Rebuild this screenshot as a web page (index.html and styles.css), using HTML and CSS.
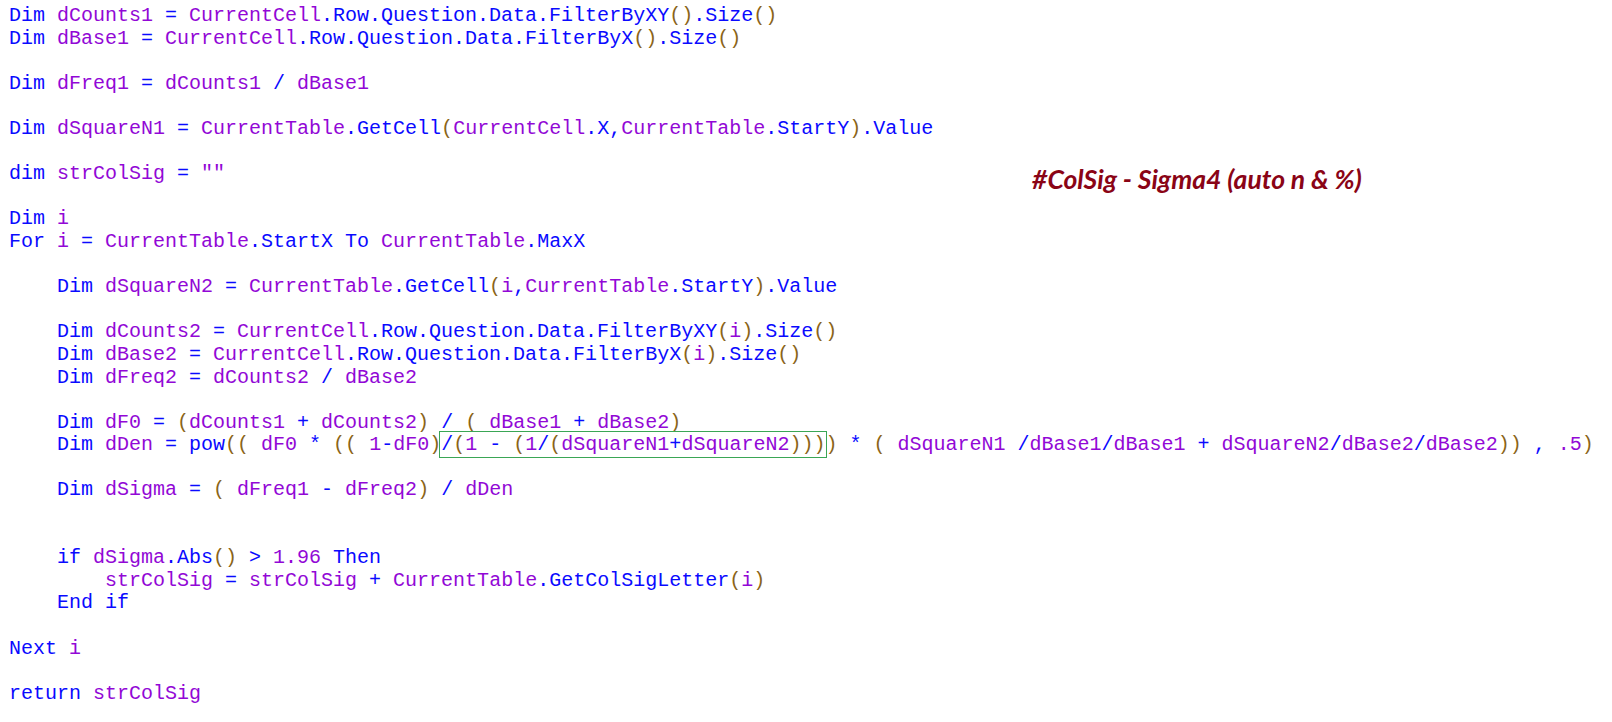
FILE: index.html
```html
<!doctype html>
<html lang="en">
    <head>
        <meta charset="UTF-8" />
        <meta name="viewport" content="width=device-width, initial-scale=1.0" />
        <title>ColSig - Sigma4</title>
        <link rel="stylesheet" href="styles.css">
    </head>
    <body>
        <!-- Script editor contents, coloured the way the editor shows them -->
<pre class="code">Dim <span class="v">dCounts1</span> = <span class="v">CurrentCell</span>.Row.Question.Data.FilterByXY<span class="p">()</span>.Size<span class="p">()</span>
Dim <span class="v">dBase1</span> = <span class="v">CurrentCell</span>.Row.Question.Data.FilterByX<span class="p">()</span>.Size<span class="p">()</span>

Dim <span class="v">dFreq1</span> = <span class="v">dCounts1</span> / <span class="v">dBase1</span>

Dim <span class="v">dSquareN1</span> = <span class="v">CurrentTable</span>.GetCell<span class="p">(</span><span class="v">CurrentCell</span>.X,<span class="v">CurrentTable</span>.StartY<span class="p">)</span>.Value

dim <span class="v">strColSig</span> = <span class="v">""</span><span class="note">#ColSig - Sigma4 (auto n &amp; %)</span>

Dim <span class="v">i</span>
For <span class="v">i</span> = <span class="v">CurrentTable</span>.StartX To <span class="v">CurrentTable</span>.MaxX

    Dim <span class="v">dSquareN2</span> = <span class="v">CurrentTable</span>.GetCell<span class="p">(</span><span class="v">i</span>,<span class="v">CurrentTable</span>.StartY<span class="p">)</span>.Value

    Dim <span class="v">dCounts2</span> = <span class="v">CurrentCell</span>.Row.Question.Data.FilterByXY<span class="p">(</span><span class="v">i</span><span class="p">)</span>.Size<span class="p">()</span>
    Dim <span class="v">dBase2</span> = <span class="v">CurrentCell</span>.Row.Question.Data.FilterByX<span class="p">(</span><span class="v">i</span><span class="p">)</span>.Size<span class="p">()</span>
    Dim <span class="v">dFreq2</span> = <span class="v">dCounts2</span> / <span class="v">dBase2</span>

    Dim <span class="v">dF0</span> = <span class="p">(</span><span class="v">dCounts1</span> + <span class="v">dCounts2</span><span class="p">)</span> / <span class="p">(</span> <span class="v">dBase1</span> + <span class="v">dBase2</span><span class="p">)</span>
    Dim <span class="v">dDen</span> = pow<span class="p">((</span> <span class="v">dF0</span> * <span class="p">((</span> <span class="v">1</span>-<span class="v">dF0</span><span class="p">)</span><span class="mark">/<span class="p">(</span><span class="v">1</span> - <span class="p">(</span><span class="v">1</span>/<span class="p">(</span><span class="v">dSquareN1</span>+<span class="v">dSquareN2</span><span class="p">)))</span></span><span class="p">)</span> * <span class="p">(</span> <span class="v">dSquareN1</span> /<span class="v">dBase1</span>/<span class="v">dBase1</span> + <span class="v">dSquareN2</span>/<span class="v">dBase2</span>/<span class="v">dBase2</span><span class="p">))</span> , <span class="v">.5</span><span class="p">)</span>

    Dim <span class="v">dSigma</span> = <span class="p">(</span> <span class="v">dFreq1</span> - <span class="v">dFreq2</span><span class="p">)</span> / <span class="v">dDen</span>


    if <span class="v">dSigma</span>.Abs<span class="p">()</span> &gt; <span class="v">1.96</span> Then
        <span class="v">strColSig</span> = <span class="v">strColSig</span> + <span class="v">CurrentTable</span>.GetColSigLetter<span class="p">(</span><span class="v">i</span><span class="p">)</span>
    End if

Next <span class="v">i</span>

return <span class="v">strColSig</span></pre>
    </body>
</html>
```

FILE: styles.css
```css
:root {
    --keyword: #0a0aff;
    --ident: #9208d6;
    --paren: #8a6418;
    --note: #8a0416;
    --box: #3aa655;
}

body {
    margin: 0;
    background-color: white;
}
.code {
    margin: 0;
    padding: 5px 9px;
    font-family: "Liberation Mono", "Courier New", monospace;
    font-size: 20px;
    line-height: 22.6px;
    color: var(--keyword);
    white-space: pre;
}
.v {
    color: var(--ident);
}
.p {
    color: var(--paren);
}
/* highlighted part of the dDen formula */
.mark {
    outline: 1px solid var(--box);
    outline-offset: 1px;
}
.note {
    margin-left: 807px;
    font-family: Lato, "Open Sans", sans-serif;
    font-size: 26.5px;
    font-weight: bold;
    font-style: italic;
    line-height: 10px;
    vertical-align: -10px;
    color: var(--note);
}
```
